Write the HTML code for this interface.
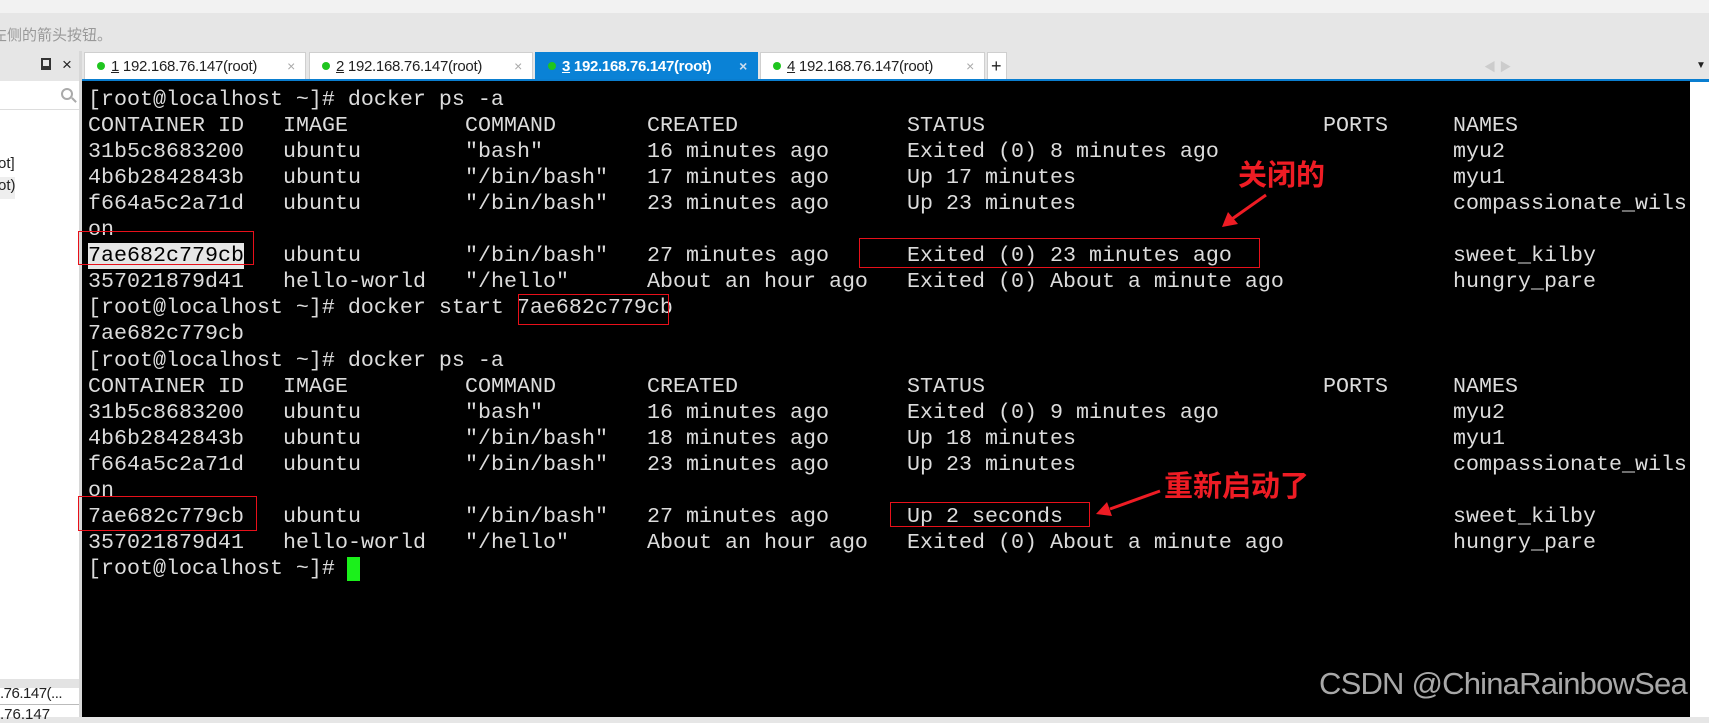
<!DOCTYPE html>
<html><head><meta charset="utf-8">
<style>
*{margin:0;padding:0;box-sizing:border-box}
body{width:1709px;height:717px;overflow:hidden;background:#e6e6e6;position:relative;font-family:"Liberation Sans","Noto Sans CJK SC",sans-serif}
.abs{position:absolute}
.term{position:absolute;left:82px;top:81px;width:1608px;height:636px;background:#000}
.ln{position:absolute;left:6px;height:26px;width:1600px;font-family:"Liberation Mono",monospace;font-size:21.67px;line-height:26px;color:#dcdcdc;white-space:pre}
.ln span{position:absolute;top:0}
.tab{position:absolute;top:52px;height:28px;background:#fff;border:1px solid #cfcfcf;border-bottom:none;font-size:15px;line-height:27px;color:#222;padding-left:12px;letter-spacing:-0.3px}
.tab .dot{display:inline-block;width:8px;height:8px;border-radius:50%;background:#1fc51f;margin-right:6px;vertical-align:1px}
.tab .x{position:absolute;right:10px;top:0;color:#aaa;font-size:14px}
.box{position:absolute;border:1.5px solid #e8101a}
.red{position:absolute;color:#ee1c24;font-weight:bold;font-size:29px;font-family:"Noto Sans CJK SC",sans-serif;line-height:1}
</style></head><body>
<div class="abs" style="left:0;top:0;width:1709px;height:13px;background:#f2f2f2"></div>
<div class="abs" style="left:-8px;top:24px;font-size:15px;color:#999">左侧的箭头按钮。</div>
<div class="abs" style="left:0;top:51px;width:80px;height:666px;background:#fff"></div>
<div class="abs" style="left:0;top:51px;width:80px;height:30px;background:#e6e6e6"></div>
<div class="abs" style="left:41px;top:58px;width:10px;height:12px;border:2px solid #333;border-bottom-width:4px"></div>
<div class="abs" style="left:62px;top:55px;font-size:17px;color:#222">×</div>
<div class="abs" style="left:0;top:109px;width:80px;height:1px;background:#ddd"></div>
<div class="abs" style="left:61px;top:88px;width:12px;height:12px;border:2px solid #aaa;border-radius:50%"></div>
<div class="abs" style="left:71px;top:99px;width:6px;height:2px;background:#aaa;transform:rotate(45deg)"></div>
<div class="abs" style="left:-2px;top:155px;font-size:15px;color:#222">ot]</div>
<div class="abs" style="left:0;top:177px;width:15px;height:22px;background:#eee"></div>
<div class="abs" style="left:-2px;top:177px;font-size:15px;color:#222">ot)</div>
<div class="abs" style="left:0;top:679px;width:80px;height:9px;background:#e3e3e3"></div>
<div class="abs" style="left:0;top:685px;font-size:15px;color:#222;letter-spacing:-0.5px">.76.147(...</div>
<div class="abs" style="left:0;top:704px;width:80px;height:1px;background:#bbb"></div>
<div class="abs" style="left:0;top:706px;font-size:15px;color:#222">.76.147</div>
<div class="abs" style="left:79px;top:51px;width:3px;height:666px;background:#d8d8d8"></div>
<div class="tab" style="left:84px;width:222px"><span class="dot"></span><u>1</u> 192.168.76.147(root)<span class="x">×</span></div>
<div class="tab" style="left:309px;width:224px"><span class="dot"></span><u>2</u> 192.168.76.147(root)<span class="x">×</span></div>
<div class="tab" style="left:535px;width:223px;background:#0a82d6;border-color:#0a82d6;color:#fff;font-weight:bold"><span class="dot"></span><u>3</u> 192.168.76.147(root)<span class="x" style="color:#cde">×</span></div>
<div class="tab" style="left:760px;width:225px"><span class="dot"></span><u>4</u> 192.168.76.147(root)<span class="x">×</span></div>
<div class="tab" style="left:987px;width:20px;padding-left:3px;font-size:18px">+</div>
<div class="abs" style="left:1484px;top:58px;color:#ccc;font-size:12px">◀ ▶</div>
<div class="abs" style="left:1696px;top:60px;color:#222;font-size:10px">▼</div>
<div class="abs" style="left:82px;top:79px;width:1627px;height:3px;background:#0a7ed0"></div>
<div class="abs" style="left:1690px;top:82px;width:19px;height:635px;background:#fff"></div>
<div class="term">
<div class="abs" style="left:6px;top:162px;width:156px;height:26px;background:#e6e6e6"></div>
<div class="abs" style="left:265px;top:476px;width:13px;height:24px;background:#1bf01b"></div>
</div>
<div id="t" class="abs" style="left:82px;top:87px"></div>
<div class="abs" style="left:1319px;top:666px;font-size:31px;color:#a8a8a8;letter-spacing:-0.8px">CSDN @ChinaRainbowSea</div>
<div class="box" style="left:78px;top:231px;width:176px;height:34px"></div>
<div class="box" style="left:859px;top:238px;width:401px;height:30px"></div>
<div class="box" style="left:518px;top:294px;width:151px;height:31px"></div>
<div class="box" style="left:78px;top:496px;width:179px;height:35px"></div>
<div class="box" style="left:890px;top:502px;width:200px;height:25px"></div>
<div class="red" style="left:1238px;top:159px">关闭的</div>
<div class="red" style="left:1164px;top:470px">重新启动了</div>
<svg class="abs" style="left:0;top:0" width="1709" height="717">
<line x1="1266" y1="195" x2="1232" y2="219" stroke="#ee1c24" stroke-width="3"/>
<polygon points="1222,227 1228,212 1238,224" fill="#ee1c24"/>
<line x1="1160" y1="491" x2="1110" y2="509" stroke="#ee1c24" stroke-width="3"/>
<polygon points="1096,514 1107,502 1112,516" fill="#ee1c24"/>
</svg>
<script>
var cols=[0,15,29,43,63,95,105];
var rows=[
["[root@localhost ~]# docker ps -a"],
["CONTAINER ID","IMAGE","COMMAND","CREATED","STATUS","PORTS","NAMES"],
["31b5c8683200","ubuntu","\"bash\"","16 minutes ago","Exited (0) 8 minutes ago","","myu2"],
["4b6b2842843b","ubuntu","\"/bin/bash\"","17 minutes ago","Up 17 minutes","","myu1"],
["f664a5c2a71d","ubuntu","\"/bin/bash\"","23 minutes ago","Up 23 minutes","","compassionate_wils"],
["on"],
["7ae682c779cb","ubuntu","\"/bin/bash\"","27 minutes ago","Exited (0) 23 minutes ago","","sweet_kilby"],
["357021879d41","hello-world","\"/hello\"","About an hour ago","Exited (0) About a minute ago","","hungry_pare"],
["[root@localhost ~]# docker start 7ae682c779cb"],
["7ae682c779cb"],
["[root@localhost ~]# docker ps -a"],
["CONTAINER ID","IMAGE","COMMAND","CREATED","STATUS","PORTS","NAMES"],
["31b5c8683200","ubuntu","\"bash\"","16 minutes ago","Exited (0) 9 minutes ago","","myu2"],
["4b6b2842843b","ubuntu","\"/bin/bash\"","18 minutes ago","Up 18 minutes","","myu1"],
["f664a5c2a71d","ubuntu","\"/bin/bash\"","23 minutes ago","Up 23 minutes","","compassionate_wils"],
["on"],
["7ae682c779cb","ubuntu","\"/bin/bash\"","27 minutes ago","Up 2 seconds","","sweet_kilby"],
["357021879d41","hello-world","\"/hello\"","About an hour ago","Exited (0) About a minute ago","","hungry_pare"],
["[root@localhost ~]# "]
];
var h="";
rows.forEach(function(r,i){
 h+='<div class="ln" style="top:'+(i*26.05).toFixed(2)+'px">';
 r.forEach(function(c,j){
  var col=(i==6&&j==0)?' color:#000;':'';
  h+='<span style="left:'+(cols[j]*13.0)+'px;'+col+'">'+c.replace(/</g,"&lt;")+'</span>';
 });
 h+='</div>';
});
document.getElementById('t').innerHTML=h;
</script>
</body></html>
